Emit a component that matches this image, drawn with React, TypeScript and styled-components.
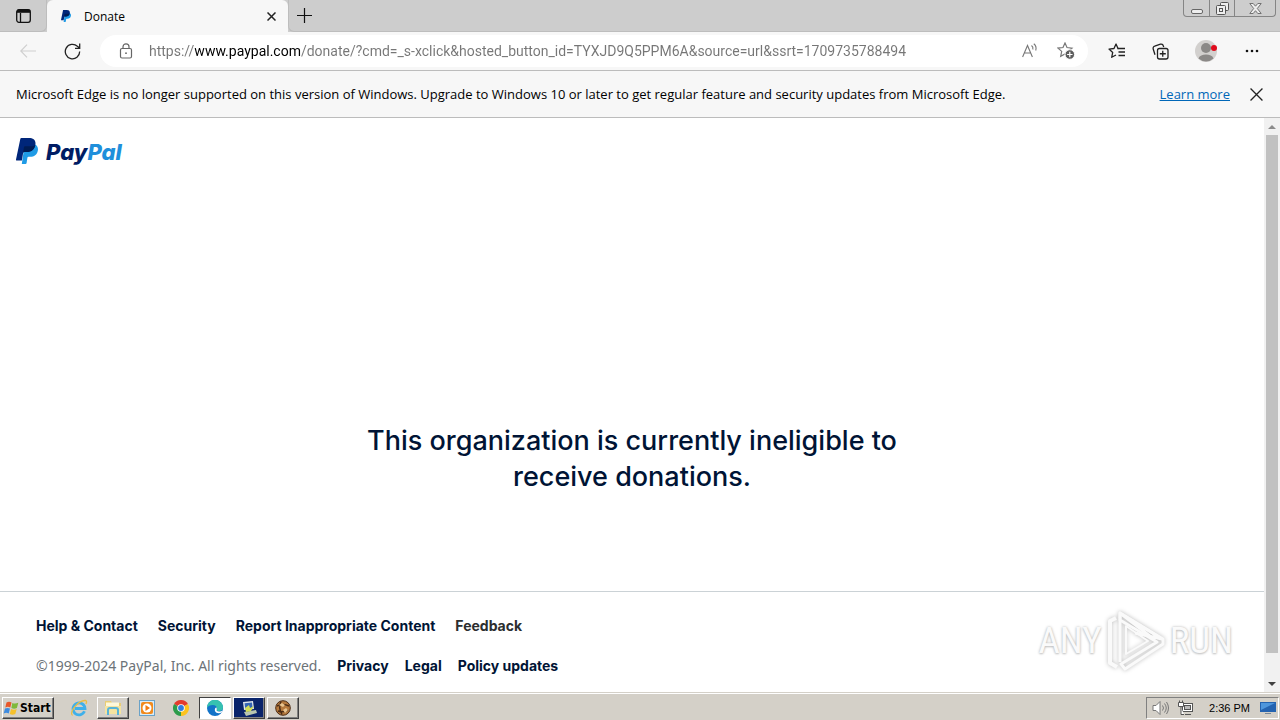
import React from 'react';
import styled, { createGlobalStyle } from 'styled-components';

const ui = '"Open Sans", "Noto Sans", sans-serif';
const brand = 'Inter, "Liberation Sans", sans-serif';
const classic = '"DejaVu Sans Condensed", "DejaVu Sans", sans-serif';

const GlobalStyle = createGlobalStyle`
  * { box-sizing: border-box; }
  body { margin: 0; background: #fff; font-family: ${ui}; color: #000; }
  button { margin: 0; padding: 0; border: 0; background: none; font: inherit; color: inherit; }
  svg { display: block; flex: none; }
`;

const Window = styled.div`
  display: flex;
  flex-direction: column;
  min-height: 100vh;
`;

const TabStrip = styled.div`
  display: flex;
  height: 32px;
  background: #cdcdcd;
`;

const TabActions = styled.button`
  width: 47px;
  display: flex;
  align-items: center;
  justify-content: center;
  border-right: 1px solid #bdbdbd;
  border-bottom: 1px solid #bdbdbd;
  border-bottom-right-radius: 6px;
`;

const Tab = styled.div`
  display: flex;
  align-items: center;
  width: 241px;
  padding: 0 9px 0 14px;
  background: #f7f7f7;
  border-radius: 6px 6px 0 0;
  font-size: 12px;
`;

const TabTitle = styled.span`
  flex: 1;
  padding-left: 13px;
`;

const SmallButton = styled.button`
  width: 16px;
  height: 16px;
  display: flex;
  align-items: center;
  justify-content: center;
`;

const StripRest = styled.div`
  flex: 1;
  display: flex;
  justify-content: space-between;
  align-items: flex-start;
  padding: 0 4px 0 7px;
  border-left: 1px solid #bdbdbd;
  border-bottom: 1px solid #bdbdbd;
  border-bottom-left-radius: 6px;
`;

const NewTab = styled(SmallButton)`
  height: 31px;
`;

const Caption = styled.div`
  display: flex;
  height: 17px;
  border: 1px solid #858585;
  border-top: 0;
  border-radius: 0 0 4px 4px;
`;

const CaptionButton = styled.button<{ $wide?: boolean }>`
  width: ${(p) => (p.$wide ? 41 : 25)}px;
  display: flex;
  align-items: center;
  justify-content: center;
  & + & { border-left: 1px solid #858585; }
`;

const Toolbar = styled.div`
  display: flex;
  align-items: center;
  gap: 4px;
  height: 39px;
  padding: 0 8px;
  background: #f7f7f7;
  border-bottom: 1px solid #bcbcbc;
`;

const ToolButton = styled.button<{ $wide?: boolean }>`
  width: ${(p) => (p.$wide ? 44 : 40)}px;
  height: 32px;
  display: flex;
  align-items: center;
  justify-content: center;
`;

const AddressBar = styled.div`
  flex: 1;
  display: flex;
  align-items: center;
  height: 32px;
  margin: 0 4px;
  padding: 0 14px 0 18px;
  background: #fff;
  border-radius: 16px;
  gap: 20px;
`;

/* The host name is drawn darker than the scheme and the path. */
const Address = styled.input`
  flex: 1;
  min-width: 0;
  height: 24px;
  margin-left: -5px;
  padding: 0;
  border: 0;
  outline: 0;
  font: 14px/24px Roboto, ${ui};
  background: linear-gradient(to right, #767676 46px, #000 46px, #000 151px, #767676 151px);
  -webkit-background-clip: text;
  background-clip: text;
  -webkit-text-fill-color: transparent;
`;

const InfoBar = styled.div`
  display: flex;
  align-items: center;
  min-height: 47px;
  padding: 0 12px 0 16px;
  background: #f7f7f7;
  border-bottom: 1px solid #bcbcbc;
  font-size: 13px;
`;

const InfoText = styled.span`
  flex: 1;
`;

const InfoLink = styled.a`
  color: #0067b8;
  margin-right: 14px;
`;

const InfoClose = styled.button`
  width: 24px;
  height: 24px;
  display: flex;
  align-items: center;
  justify-content: center;
`;

const Viewport = styled.div`
  flex: 1;
  display: flex;
`;

const Page = styled.div`
  position: relative;
  flex: 1;
  display: flex;
  flex-direction: column;
  background: #fff;
  font-family: ${brand};
`;

const Logo = styled.a`
  display: flex;
  align-items: center;
  align-self: flex-start;
  gap: 8px;
  height: 26px;
  margin: 20px 16px;
  color: #001c64;
  text-decoration: none;
  font: italic 800 22px/28px ${brand};
`;

const Wordmark = styled.span`
  padding-top: 2px;
`;

const Light = styled.span`
  color: #1f8fdb;
`;

const Main = styled.main`
  flex: 1;
  display: flex;
  align-items: flex-end;
  justify-content: center;
  padding-bottom: 96px;
`;

const Heading = styled.h1`
  max-width: 580px;
  margin: 0;
  font-size: 27px;
  line-height: 36px;
  font-weight: 500;
  text-align: center;
  color: #001435;
`;

const Footer = styled.footer`
  display: flex;
  flex-direction: column;
  gap: 20px;
  padding: 24px 36px 16px;
  border-top: 1px solid #cbd2d6;
  font-size: 14px;
  line-height: 20px;
`;

const FooterRow = styled.div<{ $gap: number }>`
  display: flex;
  gap: ${(p) => p.$gap}px;
`;

const FooterLink = styled.a<{ $dim?: boolean }>`
  color: ${(p) => (p.$dim ? '#2c2e2f' : '#001435')};
  font-weight: 700;
  text-decoration: none;
`;

const Copyright = styled.span`
  color: #6c7378;
  font-family: "Noto Sans", sans-serif;
`;

const Watermark = styled.div`
  position: absolute;
  right: 31px;
  bottom: 18px;
  display: flex;
  align-items: center;
  gap: 4px;
  font: 37px/66px "Roboto Condensed", "Liberation Sans Narrow", "Liberation Sans", sans-serif;
  color: #fafafa;
  text-shadow: 0 0 3px #bbb, 0 1px 2px #ccc;
`;

const WatermarkLogo = styled.svg`
  filter: drop-shadow(0 0 2px #bbb);
`;

const Scrollbar = styled.div`
  width: 16px;
  display: flex;
  flex-direction: column;
  align-items: center;
  background: #f1f1f1;
`;

const ScrollArrow = styled.button`
  width: 16px;
  height: 17px;
  display: flex;
  align-items: center;
  justify-content: center;
`;

const Thumb = styled.div`
  flex: 518;
  width: 12px;
  background: #c1c1c1;
`;

const Track = styled.div`
  flex: 22;
`;

const Taskbar = styled.div`
  display: flex;
  align-items: center;
  justify-content: space-between;
  height: 28px;
  padding: 2px 1px 0 2px;
  background: #d4d0c8;
  border-top: 1px solid #d4d0c8;
  box-shadow: inset 0 1px #fff;
  font: 12px/16px ${classic};
`;

const TaskGroup = styled.div`
  display: flex;
  align-items: center;
  gap: 2px;
`;

const StartButton = styled.button`
  display: flex;
  align-items: center;
  width: 52px;
  height: 22px;
  margin-right: 7px;
  border: 1px solid;
  border-color: #fff #404040 #404040 #fff;
  box-shadow: inset -1px -1px #808080;
  font-weight: 700;
`;

const TaskButton = styled.button<{ $look?: 'raised' | 'active' | 'dark' }>`
  width: 32px;
  height: 22px;
  display: flex;
  align-items: center;
  justify-content: center;
  border: 1px solid transparent;
  ${(p) => p.$look && 'border-color: #fff #404040 #404040 #fff; box-shadow: inset -1px -1px #808080;'}
  ${(p) => p.$look === 'active' && 'border-color: #404040 #fff #fff #404040; background: #fff; box-shadow: none;'}
  ${(p) => p.$look === 'dark' && 'background: #0a246a;'}
`;

const Tray = styled.div`
  display: flex;
  align-items: center;
  gap: 8px;
  height: 22px;
  padding: 0 2px 0 5px;
  border: 1px solid;
  border-color: #808080 #fff #fff #808080;
`;

const Clock = styled.time`
  padding: 0 2px 0 8px;
  font: 11px/16px "Liberation Sans", sans-serif;
`;

const PayPalMark = ({ size = 26 }: { size?: number }) => (
  <svg width={Math.round(size * 0.85)} height={size} viewBox="0 0 22 26" aria-hidden="true">
    <path d="M19 6.5c2.600 1.200 3.400 3.600 2.800 6.300-.9 4.200-3.600 6-7.600 6h-1.700c-.6 0-1 .4-1.100 1l-.8 5.200c-.1.600-.5 1-1.100 1H5.800l.5-3.500L8 11z" fill="#1f9be6" />
    <path d="M4.300.900C4.400.300 4.800 0 5.300 0h7.600c4.400 0 7.200 2.300 6.500 6.600-.8 5-4 7.400-8.500 7.400H8.200c-.6 0-1 .4-1.100 1l-1.200 7.500H.7c-.5 0-.8-.4-.7-.9z" fill="#00267a" />
    <path d="M19.300 6.700c-.8 5-4 7.300-8.400 7.300H8.200c-.5 0-1 .4-1.100 1l-.9 5.400 1.700-11c.1-.800.600-1.200 1.300-1.200h6.200c1.600 0 3-.3 3.900-1.500z" fill="#001c54" />
  </svg>
);

const Cross = ({ size }: { size: number }) => (
  <svg width={size} height={size} viewBox="0 0 12 12" fill="none" stroke="#222" strokeWidth="1.200">
    <path d="M.5.500l11 11M11.500.500l-11 11" />
  </svg>
);

const starPath = 'M8 1l2 4.500 5 .6-3.700 3.300 1 4.900L8 11.900l-4.300 2.400 1-4.900L1 6.100l5-.6z';

const ClassicArrow = ({ up }: { up?: boolean }) => (
  <svg width="8" height="4" viewBox="0 0 8 4">
    <path d={up ? 'M0 4l4-4 4 4z' : 'M0 0l4 4 4-4z'} fill={up ? '#8b8b8b' : '#404040'} />
  </svg>
);

export default function App() {
  return (
    <Window>
      <GlobalStyle />
      <TabStrip>
        <TabActions aria-label="Tab actions menu">
          <svg width="15" height="14" viewBox="0 0 15 14" fill="none" stroke="#111" strokeWidth="1.300">
            <rect x=".7" y=".7" width="13.600" height="12.600" rx="2.200" />
            <path d="M1 2.300h13" strokeWidth="3" />
            <path d="M4.500 4v9" />
          </svg>
        </TabActions>
        <Tab>
          <PayPalMark size={12} />
          <TabTitle>Donate</TabTitle>
          <SmallButton aria-label="Close tab">
            <svg width="9" height="9" viewBox="0 0 9 9" fill="none" stroke="#222" strokeWidth="1.500">
              <path d="M.5.500l8 8M8.500.500l-8 8" />
            </svg>
          </SmallButton>
        </Tab>
        <StripRest>
          <NewTab aria-label="New tab">
            <svg width="15" height="15" viewBox="0 0 15 15" stroke="#111" strokeWidth="1.200">
              <path d="M7.500 0v15M0 7.500h15" />
            </svg>
          </NewTab>
          <Caption>
            <CaptionButton aria-label="Minimize">
              <svg width="12" height="14" viewBox="0 0 12 14" fill="#eee" stroke="#666">
                <rect x=".5" y="8.500" width="11" height="4" rx="1.500" />
              </svg>
            </CaptionButton>
            <CaptionButton aria-label="Restore">
              <svg width="13" height="13" viewBox="0 0 13 13" fill="#eee" stroke="#555">
                <rect x="4.500" y=".5" width="8" height="8" rx="1" />
                <rect x=".5" y="3.500" width="9" height="9" rx="1" />
                <rect x="3.500" y="6.500" width="3" height="3" />
              </svg>
            </CaptionButton>
            <CaptionButton $wide aria-label="Close">
              <svg width="13" height="11" viewBox="0 0 13 11" fill="#eee" stroke="#666" strokeWidth=".9">
                <path d="M.8.500h3.400l2.300 2.700L8.800.500h3.400L8.300 5.500l3.900 5H8.800L6.500 7.700l-2.300 2.800H.8l3.900-5z" />
              </svg>
            </CaptionButton>
          </Caption>
        </StripRest>
      </TabStrip>

      <Toolbar>
        <ToolButton aria-label="Back" disabled>
          <svg width="16" height="14" viewBox="0 0 16 14" fill="none" stroke="#cfcfcf" strokeWidth="1.200">
            <path d="M16 7H1M7 .7L.8 7 7 13.300" />
          </svg>
        </ToolButton>
        <ToolButton aria-label="Refresh">
          <svg width="17" height="17" viewBox="0 0 17 17" fill="none" stroke="#222" strokeWidth="1.300">
            <path d="M15.700 8.500a7.200 7.200 0 1 1-2.300-5.200L15.500 5M15.700.500V5.300H11" />
          </svg>
        </ToolButton>
        <AddressBar>
          <svg width="16" height="16" viewBox="0 0 16 16" fill="none" stroke="#666" strokeWidth="1.200">
            <rect x="2.500" y="5.500" width="11" height="9.500" rx="1.500" />
            <path d="M5 5.500V3.800a3 3 0 0 1 6 0v1.700" />
            <circle cx="8" cy="10.200" r=".9" fill="#666" stroke="none" />
          </svg>
          <Address
            aria-label="Address"
            spellCheck={false}
            defaultValue="https://www.paypal.com/donate/?cmd=_s-xclick&hosted_button_id=TYXJD9Q5PPM6A&source=url&ssrt=1709735788494"
          />
          <SmallButton aria-label="Read aloud">
            <svg width="16" height="16" viewBox="0 0 16 16" fill="none" stroke="#777" strokeWidth="1.100">
              <path d="M.6 14L5.500 2.500 10.400 14M2.400 10h6.200" />
              <path d="M9.500 2.500q2 1.500 1.300 4M11.800.800q3.200 2.600 1.900 6.700" />
            </svg>
          </SmallButton>
          <SmallButton aria-label="Add to favorites">
            <svg width="18" height="18" viewBox="0 0 18 18" fill="none" stroke="#777" strokeWidth="1.200">
              <path d={starPath} />
              <circle cx="12.800" cy="12.500" r="4.800" fill="#5c5c5c" stroke="#fff" strokeWidth="1" />
              <path d="M12.800 9.800v5.400M10.100 12.500h5.400" stroke="#fff" />
            </svg>
          </SmallButton>
        </AddressBar>
        <ToolButton aria-label="Favorites">
          <svg width="17" height="16" viewBox="0 0 17 16" fill="none" stroke="#222" strokeWidth="1.300" strokeLinejoin="round">
            <path d="M9.800 5.500H10L8 1 6 5.500l-5 .6 3.700 3.300-1 4.900L8 12" />
            <path d="M9.500 5.500H17M10.500 9H17M10.500 12.500H17" />
          </svg>
        </ToolButton>
        <ToolButton aria-label="Collections">
          <svg width="17" height="17" viewBox="0 0 17 17" fill="none" stroke="#222" strokeWidth="1.300">
            <path d="M3 11.700L1.200 6A2.200 2.200 0 0 1 2.700 3.200L8.500 1.200A2.200 2.200 0 0 1 11.300 2.700l.4 1.300" />
            <rect x="5.500" y="5.500" width="10.500" height="10.500" rx="2" fill="#f7f7f7" />
            <path d="M10.750 7.800v6M7.800 10.750h6" />
          </svg>
        </ToolButton>
        <ToolButton $wide aria-label="Profile">
          <svg width="22" height="22" viewBox="0 0 22 22">
            <circle cx="11" cy="11" r="11" fill="#d2d0ce" />
            <circle cx="11" cy="8" r="5" fill="#8b8987" />
            <path d="M3.500 18.500c1-3 4-4 7.500-4s6.500 1 7.500 4A11 11 0 0 1 3.500 18.500z" fill="#8b8987" />
            <circle cx="19" cy="8" r="3" fill="#e00b1c" />
          </svg>
        </ToolButton>
        <ToolButton aria-label="Settings and more">
          <svg width="14" height="4" viewBox="0 0 14 4" fill="#111">
            <circle cx="2" cy="2" r="1.300" />
            <circle cx="7" cy="2" r="1.300" />
            <circle cx="12" cy="2" r="1.300" />
          </svg>
        </ToolButton>
      </Toolbar>

      <InfoBar>
        <InfoText>
          Microsoft Edge is no longer supported on this version of Windows. Upgrade to Windows 10 or later to get regular
          feature and security updates from Microsoft Edge.
        </InfoText>
        <InfoLink href="#learn">Learn more</InfoLink>
        <InfoClose aria-label="Dismiss">
          <Cross size={13} />
        </InfoClose>
      </InfoBar>

      <Viewport>
        <Page>
          <Logo href="#home">
            <PayPalMark />
            <Wordmark>Pay<Light>Pal</Light></Wordmark>
          </Logo>
          <Main>
            <Heading>This organization is currently ineligible to receive donations.</Heading>
          </Main>
          <Footer>
            <FooterRow $gap={20}>
              <FooterLink href="#help">Help &amp; Contact</FooterLink>
              <FooterLink href="#security">Security</FooterLink>
              <FooterLink href="#report">Report Inappropriate Content</FooterLink>
              <FooterLink href="#feedback" $dim>Feedback</FooterLink>
            </FooterRow>
            <FooterRow $gap={16}>
              <Copyright>©1999-2024 PayPal, Inc. All rights reserved.</Copyright>
              <FooterLink href="#privacy">Privacy</FooterLink>
              <FooterLink href="#legal">Legal</FooterLink>
              <FooterLink href="#policy">Policy updates</FooterLink>
            </FooterRow>
          </Footer>
          <Watermark>
            <span>ANY</span>
            <WatermarkLogo width="60" height="66" viewBox="0 0 60 66" fill="none" stroke="#fafafa" strokeWidth="4" strokeLinejoin="round">
              <path d="M10 10L4 13v42l7 4" />
              <path d="M14 54V5l42 26-27-6M14 5l35 27" strokeWidth="3" />
              <path d="M14 5l43 26v5L19 61l-4-5 36-22L14 12z" strokeWidth="3" />
              <path d="M20 18v28l22-13z" strokeWidth="2" />
            </WatermarkLogo>
            <span>RUN</span>
          </Watermark>
        </Page>
        <Scrollbar>
          <ScrollArrow aria-label="Scroll up"><ClassicArrow up /></ScrollArrow>
          <Thumb />
          <Track />
          <ScrollArrow aria-label="Scroll down"><ClassicArrow /></ScrollArrow>
        </Scrollbar>
      </Viewport>

      <Taskbar>
        <TaskGroup>
          <StartButton>
            <svg width="17" height="16" viewBox="0 0 16 16">
              <path d="M3 2.500q2.500-1.500 5 0L6.800 7.500q-2.500-1.300-5 0z" fill="#e8572a" />
              <path d="M8.800 3q2.800 1.300 6-.2L13.400 8q-2.800 1.300-5.500 0z" fill="#7fb93c" />
              <path d="M1.500 8.600q2.500-1.400 5 0L5.200 13.500q-2.500-1.400-5 0z" fill="#3d8be0" />
              <path d="M7.600 9q2.800 1.300 5.600 0l-1.400 5q-2.800 1.300-5.500 0z" fill="#f6c12c" />
            </svg>
            Start
          </StartButton>
          <TaskButton aria-label="Internet Explorer">
            <svg width="18" height="18" viewBox="0 0 18 18" fill="none">
              <path d="M14.500 12.300A6 6 0 1 1 15 9.500H5" stroke="#3fb0ea" strokeWidth="2.800" />
              <path d="M2.500 16.500C-1.500 14 8 1 15.500 1.500c1.500.3 1.200 2 .4 3.500" stroke="#e9bd45" strokeWidth="1.300" />
            </svg>
          </TaskButton>
          <TaskButton $look="raised" aria-label="Explorer">
            <svg width="18" height="17" viewBox="0 0 18 17">
              <path d="M1 2h6l1 2h9v11H1z" fill="#e9cd75" />
              <path d="M2 3.500h13v6H2z" fill="#fff8da" />
              <path d="M1 7h16v8H1z" fill="#f5e3a0" />
              <path d="M4 16V11q0-2 2-2h6q2 0 2 2v5" fill="none" stroke="#58b4d8" strokeWidth="2" />
            </svg>
          </TaskButton>
          <TaskButton aria-label="Media Player">
            <svg width="16" height="16" viewBox="0 0 16 16">
              <rect x=".5" y=".5" width="15" height="15" fill="#d8ecf8" stroke="#6aa2c8" />
              <rect x="2" y="2" width="12" height="12" rx="2" fill="#f18a1d" />
              <circle cx="8" cy="8" r="4.500" fill="#fff" />
              <path d="M6.500 5l4.500 3-4.500 3z" fill="#f07a10" />
            </svg>
          </TaskButton>
          <TaskButton aria-label="Chrome">
            <svg width="16" height="16" viewBox="0 0 16 16">
              <path d="M8 8L1.070 4A8 8 0 0 1 14.930 4z" fill="#e33b2e" />
              <path d="M8 8l6.930-4A8 8 0 0 1 8 16z" fill="#fcc31e" />
              <path d="M8 8v8A8 8 0 0 1 1.070 4z" fill="#2c9c4b" />
              <circle cx="8" cy="8" r="3.800" fill="#fff" />
              <circle cx="8" cy="8" r="2.900" fill="#2f7de1" />
            </svg>
          </TaskButton>
          <TaskButton $look="active" aria-label="Microsoft Edge">
            <svg width="16" height="16" viewBox="0 0 16 16">
              <circle cx="8" cy="8" r="8" fill="#1273c8" />
              <path d="M0 8a8 8 0 0 1 16-.5c0 2.500-1.800 3.500-4 3.500-1.800 0-2.500-.6-2-1.500C10.500 7 8.500 5 5.800 5 3 5 .8 6 0 8z" fill="#36c1b0" />
              <path d="M9.800 9.500c-.6 1 .3 2 2.200 2 1.600 0 2.600-.3 3.300-.8l-.6 1.600c-2 1.500-5.700 1.200-6.700-1.300-.6-1.700.3-3.300 1.600-3.400z" fill="#fff" />
            </svg>
          </TaskButton>
          <TaskButton $look="dark" aria-label="Remote tool">
            <svg width="18" height="16" viewBox="0 0 18 16">
              <path d="M3 2l10-1 1 8-10 1z" fill="#dfe6ea" />
              <path d="M4.500 3.200l7.500-.7.600 5.500-7.300.8z" fill="#3465b5" />
              <path d="M4 12l12-2 1 3-11 3z" fill="#b9c6b0" />
              <path d="M5 8l4-3 1 3 4-2-3 5-5 1z" fill="#d3de55" />
            </svg>
          </TaskButton>
          <TaskButton $look="raised" aria-label="Network tool">
            <svg width="16" height="16" viewBox="0 0 16 16" fill="none">
              <circle cx="8" cy="8" r="7.300" fill="#b5793c" stroke="#4c2c14" />
              <path d="M2 6q6-3 12 0M3 11q5 2 10-1M6 1.500q-3 6 1 13" stroke="#4c2c14" strokeWidth="1.500" />
              <path d="M4 5l3-2 3 2-2 2zM8 10l3-2 2 2-3 3z" fill="#e9c48e" />
            </svg>
          </TaskButton>
        </TaskGroup>
        <Tray>
          <svg width="17" height="16" viewBox="0 0 17 16" fill="none" stroke="#777">
            <path d="M1 5.500h3l4-4v13l-4-4H1z" fill="#fff" />
            <path d="M10.500 5.500q2 2.500 0 5M12.500 3.500q3.500 4.500 0 9M14.500 2q4 6 0 12" />
          </svg>
          <svg width="16" height="16" viewBox="0 0 16 16" fill="#fff" stroke="#555">
            <rect x="5.500" y="3.500" width="10" height="8" />
            <rect x="7.500" y="5.500" width="6" height="4" fill="#bbb" />
            <path d="M8 14.500h6M1.500 2.500h5v4h-5zM2.500.500v2M5.500.500v2M4 7v7.500h3" />
          </svg>
          <Clock>2:36 PM</Clock>
          <svg width="16" height="14" viewBox="0 0 16 14">
            <path d="M0 1h16v10H0z" fill="#2463b0" />
            <path d="M1 2h14L1 9z" fill="#4e96dc" />
            <path d="M5 12h6v1H5z" fill="#789" />
          </svg>
        </Tray>
      </Taskbar>
    </Window>
  );
}
